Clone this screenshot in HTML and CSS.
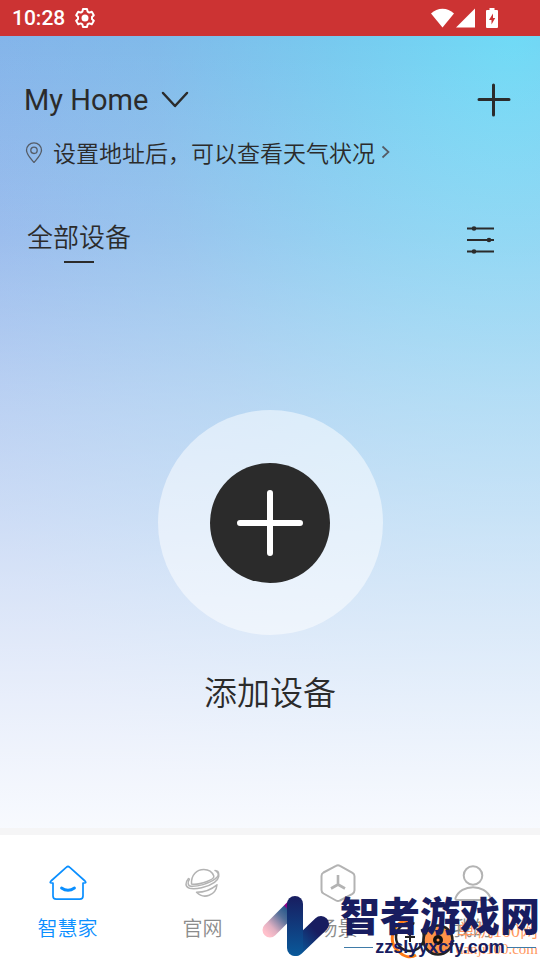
FILE: index.html
```html
<!DOCTYPE html>
<html lang="zh-CN">
<head>
    <meta charset="UTF-8">
    <meta name="viewport" content="width=device-width, initial-scale=1.0">
    <title>智慧家</title>
    <link rel="stylesheet" href="styles.css">
</head>
<body>

    <div class="status-bar">
        <span class="clock">10:28</span>
        <svg class="gear" width="20" height="20" viewBox="0 0 20 20" fill="none" stroke="#fff" stroke-width="2" stroke-linejoin="round">
            <path d="M8 1h4l.6 2.6 1.7 1 2.5-.8 2 3.4L17 9v2l1.8 1.8-2 3.4-2.5-.8-1.7 1L12 19H8l-.6-2.6-1.7-1-2.5.8-2-3.4L3 11V9L1.200 7.200l2-3.400 2.500.8 1.700-1z"/>
            <circle cx="10" cy="10" r="2.500" fill="#fff"/>
        </svg>
        <div class="status-icons">
            <svg width="23" height="20" viewBox="0 0 23 20" fill="#fff"><path d="M11.500 19.500 0 5.500Q5 .8 11.500.8T23 5.500z"/></svg>
            <svg width="19" height="20" viewBox="0 0 19 20" fill="#fff"><path d="M19 .5v19H0z"/></svg>
            <svg class="battery" width="12" height="20" viewBox="0 0 12 20"><path d="M3.500 0h5v2H11a1 1 0 0 1 1 1v16a1 1 0 0 1-1 1H1a1 1 0 0 1-1-1V3a1 1 0 0 1 1-1h2.500z" fill="#fff"/><path d="M7 5.500 3 12h2.500v4.500L9.200 10H7z" fill="#cc3333"/></svg>
        </div>
    </div>

    <main class="home">
        <div class="home-header">
            <button class="home-name" type="button">My Home
                <svg width="28" height="18" viewBox="0 0 28 18" fill="none" stroke="#2b2b2b" stroke-width="2.500" stroke-linecap="round" stroke-linejoin="round"><path d="m2 2 12 13L26 2"/></svg>
            </button>
            <button class="icon-button" type="button" aria-label="添加">
                <svg width="34" height="34" viewBox="0 0 34 34" fill="none" stroke="#2b2b2b" stroke-width="3" stroke-linecap="round"><path d="M16.500 2v30M2 16.500h30"/></svg>
            </button>
        </div>

        <a class="weather" href="#">
            <svg width="18" height="22" viewBox="0 0 18 22" fill="none" stroke="#555c66" stroke-width="1.300"><path d="M9 21.500C6 18 1.500 13.500 1.500 9.300a7.500 7.500 0 0 1 15 0C16.500 13.500 12 18 9 21.500z"/><circle cx="9" cy="9.300" r="3.200"/></svg>
            <span>设置地址后，可以查看天气状况</span>
            <svg class="arrow" width="9" height="14" viewBox="0 0 9 14" fill="none" stroke="#555c66" stroke-width="1.700"><path d="m1.500 1.500 6 5.500-6 5.500"/></svg>
        </a>

        <div class="tabs">
            <button class="tab active" type="button">全部设备</button>
            <button class="icon-button filter" type="button" aria-label="筛选">
                <svg width="28" height="30" viewBox="0 0 28 30" fill="#2b2b2b" stroke="#2b2b2b"><path d="M1 2.500h27M1 14h27M1 25.500h27" stroke-width="1.900"/><g stroke="none"><circle cx="8" cy="2.500" r="2.300"/><circle cx="23" cy="14" r="2.300"/><circle cx="8" cy="25.500" r="2.300"/></g></svg>
            </button>
        </div>

        <button class="add-device" type="button">
            <span class="halo">
                <span class="disc">
                    <svg width="68" height="68" viewBox="0 0 68 68" fill="none" stroke="#fff" stroke-width="6" stroke-linecap="round"><path d="M34 4v60M4 34h60"/></svg>
                </span>
            </span>
            <span>添加设备</span>
        </button>
    </main>

    <nav class="bottom-nav">
        <a class="nav-item active" href="#">
            <svg width="40" height="40" viewBox="0 0 40 40" fill="none" stroke="#0a8fff" stroke-width="1.700" stroke-linecap="round" stroke-linejoin="round">
                <path d="M18.500 4.200Q20 2.800 21.500 4.200L37 18Q38.800 20 36.500 20H35v13q0 3.200-3.200 3.200H8.200Q5 36.200 5 33V20H3.500Q1.200 20 3 18z"/>
                <path d="M13.500 25q6.500 4.500 13 0" stroke-width="2.800"/>
            </svg>
            <span>智慧家</span>
        </a>
        <a class="nav-item" href="#">
            <svg width="40" height="40" viewBox="0 0 40 40" fill="none" stroke="#b3b3b3" stroke-width="1.500" stroke-linecap="round" stroke-linejoin="round">
                <path d="M8.500 21C8 11.500 14 6.500 20.800 6.500c4.500 0 8.500 2.500 10 6.500.6 2-2.800 4-6.800 5.500-5 1.800-12 3.300-15.500 2.500z"/>
                <path d="M32 7.500c4.500.5 5 4.500.5 8.200C26 20.800 14 23.800 8 23.300 4.500 23 4.500 19 6.500 16"/>
                <path d="M5.500 15.500C2 19.500 2 24 6.500 25.300c6 1.500 18-1 25-6 5-3.500 5.500-8 2-10.800"/>
                <path d="M13.500 29.300c8 0 14.500-2.500 20.500-7.500-1 10.500-13 15-20.500 7.500z"/>
            </svg>
            <span>官网</span>
        </a>
        <a class="nav-item" href="#">
            <svg width="40" height="40" viewBox="0 0 40 40" fill="none" stroke="#b3b3b3" stroke-width="2" stroke-linejoin="round">
                <path d="M18 2.800q2-1.200 4 0l12.500 7q2 1.200 2 3.500v14q0 2.300-2 3.500L22 37.500q-2 1.200-4 0l-12.500-7q-2-1.200-2-3.500v-14q0-2.300 2-3.500z"/>
                <path d="M20 12v9.500l-7 4M20 21.500l7 4" stroke-width="2.600"/>
            </svg>
            <span>场景</span>
        </a>
        <a class="nav-item" href="#">
            <svg width="40" height="40" viewBox="0 0 40 40" fill="none" stroke="#b3b3b3" stroke-width="2" stroke-linejoin="round">
                <circle cx="20" cy="12.500" r="9.300"/>
                <path d="M4 37q-2 0-1.500-2C8 20.500 32 20.500 37.500 35q.5 2-1.500 2z"/>
            </svg>
            <span>我的</span>
        </a>
    </nav>

    <div class="watermark">
        <svg class="mascot" width="64" height="42" viewBox="0 0 64 42" fill="none">
            <path d="M20 3C4 0-4 23 8 33c5 5 12 8 18 4" stroke="#ff7a14" stroke-width="3"/>
            <circle cx="20" cy="19" r="14" stroke="#222" stroke-width="2.500" stroke-dasharray="70 9"/>
            <path d="M20 14v10M15 19h10" stroke="#222" stroke-width="2"/>
            <circle cx="48" cy="22" r="14.500" fill="#ff9248" stroke="#222" stroke-width="2.500"/>
            <circle cx="48" cy="22" r="5" fill="#111"/>
            <circle cx="48" cy="22" r="1.500" fill="#ff9248"/>
        </svg>
        <div class="site-old">
            <span>单机100网</span>
            <span>danji100.com</span>
        </div>
        <svg class="logo" width="68" height="64" viewBox="0 0 68 64" fill="none" stroke-linecap="round" stroke-width="16">
            <defs>
                <linearGradient id="tail" gradientUnits="userSpaceOnUse" x1="3" y1="38" x2="33" y2="10"><stop offset="0" stop-color="#ffc0cb"/><stop offset=".2" stop-color="#e0b0c2"/><stop offset=".55" stop-color="#55709a"/><stop offset=".76" stop-color="#2a5a8c"/><stop offset=".8" stop-color="#8b0087"/></linearGradient>
                <linearGradient id="stem" gradientUnits="userSpaceOnUse" x1="33" y1="2" x2="33" y2="62"><stop offset="0" stop-color="#181d60"/><stop offset="1" stop-color="#09599a"/></linearGradient>
                <linearGradient id="arm" gradientUnits="userSpaceOnUse" x1="33" y1="54" x2="60" y2="30"><stop offset="0" stop-color="#09599a"/><stop offset=".75" stop-color="#181d60"/></linearGradient>
            </defs>
            <path d="M8 36 33 11" stroke="url(#tail)" stroke-width="15"/>
            <path d="m34 54 25-24" stroke="url(#arm)"/>
            <path d="M25 10a8 8 0 0 1 16 0v44a8 8 0 0 1-16 0z" fill="url(#stem)" stroke="none"/>
        </svg>
        <div class="site-new">
            <span class="site-title">智者游戏网</span>
            <span class="site-url">zzslyyxcfy.com</span>
        </div>
    </div>

</body>
</html>
```
FILE: styles.css
```css
* {
    box-sizing: border-box;
}

body {
    font-family: Roboto, "Noto Sans CJK SC", sans-serif;
    font-weight: 350;
    color: #2b2b2b;
    background-color: #ffffff;
    display: flex;
    flex-direction: column;
    min-height: 100vh;
    margin: 0;
    position: relative;
    overflow-x: hidden;
}

button {
    font: inherit;
    color: inherit;
    background: none;
    border: none;
    padding: 0;
    cursor: pointer;
}

a {
    color: inherit;
    text-decoration: none;
}

svg {
    display: block;
    flex-shrink: 0;
}

.status-bar {
    display: flex;
    align-items: center;
    height: 36px;
    padding: 0 42px 0 12px;
    background-color: #cc3333;
    color: #ffffff;
}

.clock {
    font-size: 21px;
    font-weight: 500;
}

.gear {
    margin-left: 10px;
}

.status-icons {
    display: flex;
    gap: 2px;
    margin-left: auto;
}

.battery {
    margin-left: 9px;
}

.home {
    flex: 1;
    display: flex;
    flex-direction: column;
    padding: 44px 24px 0;
    background:
        linear-gradient(to bottom, rgba(249, 251, 255, 0) 0%, rgba(249, 251, 255, 0.22) 25%, rgba(249, 251, 255, 0.46) 46%, rgba(249, 251, 255, 0.7) 71%, rgba(249, 251, 255, 0.98) 100%),
        radial-gradient(ellipse 110% 120% at 95% 0%, #70daf6 0%, rgba(116, 206, 240, 0.85) 30%, rgba(124, 192, 234, 0.6) 60%, rgba(134, 180, 234, 0) 100%),
        linear-gradient(to bottom, #86b2ea 0%, #82a8e8 25%, #8aaee8 60%, #a8b8e8 100%);
}

.home-header {
    display: flex;
    align-items: center;
    justify-content: space-between;
    height: 40px;
    padding-right: 5px;
}

.home-name {
    display: flex;
    align-items: center;
    gap: 13px;
    font-size: 29px;
    font-weight: 400;
}

.weather {
    display: flex;
    align-items: center;
    height: 36px;
    margin-top: 14px;
    padding-left: 1px;
    font-size: 23px;
}

.weather span {
    margin-left: 10px;
}

.arrow {
    margin-left: 6px;
}

.tabs {
    display: flex;
    align-items: center;
    justify-content: space-between;
    margin-top: 48px;
    padding: 0 22px 0 3px;
}

.tab {
    display: flex;
    flex-direction: column;
    align-items: center;
    gap: 3px;
    font-size: 26px;
    line-height: 40px;
}

.tab.active::after {
    content: "";
    width: 30px;
    height: 2px;
    background-color: #2b2b2b;
}

.add-device {
    display: flex;
    flex-direction: column;
    align-items: center;
    gap: 35px;
    align-self: center;
    margin: 147px 0 109px;
    font-size: 33px;
    line-height: 48px;
}

.halo,
.disc {
    display: flex;
    align-items: center;
    justify-content: center;
    border-radius: 50%;
}

.halo {
    width: 225px;
    height: 225px;
    background-color: rgba(255, 255, 255, 0.5);
}

.disc {
    width: 120px;
    height: 120px;
    background-color: #2b2b2b;
}

.bottom-nav {
    display: grid;
    grid-template-columns: repeat(4, 1fr);
    height: 132px;
    padding-top: 28px;
    border-top: 7px solid #f5f5f6;
}

.nav-item {
    display: flex;
    flex-direction: column;
    align-items: center;
    gap: 11px;
    font-size: 20px;
    line-height: 30px;
    color: #8c8c8c;
}

.nav-item.active {
    color: #0a8fff;
}

/* site marks printed over the bottom right corner */
.watermark {
    position: absolute;
    right: 0;
    bottom: 0;
    width: 280px;
    height: 68px;
    pointer-events: none;
}

.logo {
    position: absolute;
    left: 2px;
    bottom: 2px;
}

.mascot {
    position: absolute;
    left: 130px;
    bottom: 0;
}

.site-old {
    position: absolute;
    right: 2px;
    bottom: 2px;
    display: flex;
    flex-direction: column;
    align-items: flex-end;
    font-family: "Liberation Serif", "Noto Sans CJK SC", serif;
    font-size: 15px;
    line-height: 18px;
    color: #ff9860;
}

.site-old span:first-child {
    font-size: 18px;
}

.site-new {
    position: absolute;
    right: 0;
    bottom: 3px;
    display: flex;
    flex-direction: column;
    align-items: center;
    color: #181d60;
}

.site-title {
    font-size: 40px;
    font-weight: 900;
    line-height: 38px;
}

.site-url {
    display: flex;
    align-items: center;
    gap: 2px;
    font-family: "Liberation Sans", sans-serif;
    font-size: 18px;
    font-weight: 700;
    line-height: 20px;
}

.site-url::before,
.site-url::after {
    content: "";
    width: 29px;
    height: 1px;
    background-color: #3f7ba8;
}
```
